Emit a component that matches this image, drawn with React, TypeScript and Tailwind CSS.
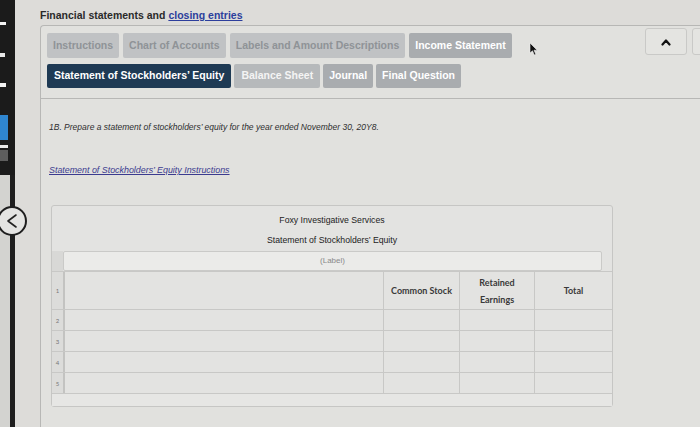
import React from "react";

const SANS = { fontFamily: '"Liberation Sans", Arial, sans-serif' };
const LATO = { fontFamily: 'Lato, "Open Sans", sans-serif' };

function LeftRail() {
  return (
    <div className="w-[15px] shrink-0 flex flex-col h-full">
      <div className="h-[175px] bg-[#1b1b1b] relative">
        <div className="absolute left-0 top-[22px] w-[6px] h-[3px] bg-[#f2f2f2]" />
        <div className="absolute left-0 top-[53px] w-[5px] h-[4px] bg-[#e8e8e8]" />
        <div className="absolute left-0 top-[83px] w-[6px] h-[4px] bg-[#f2f2f2]" />
        <div className="absolute left-0 top-[115px] w-[8px] h-[25px] bg-[#2f86d0]" />
        <div className="absolute left-0 top-[145px] w-[8px] h-[3px] bg-[#e8e8e8]" />
        <div className="absolute left-0 top-[150px] w-[8px] h-[11px] bg-[#5e5e5e]" />
      </div>
      <div className="flex-1 flex">
        <div className="w-[10px] bg-[#d3d3d0]" />
        <div className="w-[5px] bg-[#1e1e1e]" />
      </div>
    </div>
  );
}

function Tab({ label, variant, tight }: { label: string; variant: "visited" | "plain" | "active" | "dim"; tight?: boolean }) {
  const cls =
    variant === "active"
      ? "bg-[#1e3a54] text-white"
      : variant === "visited"
      ? "bg-[#c0c2c4] text-[#8f9397]"
      : variant === "dim"
      ? "bg-[#b6b9bb] text-[#f4f4f4]"
      : "bg-[#a9acaf] text-white";
  return (
    <div
      className={`h-full flex items-center ${tight ? "px-[6px]" : "px-[7px]"} rounded-[2px] text-[10.5px] font-bold whitespace-nowrap ${cls}`}
    >
      {label}
    </div>
  );
}

function Cell({ children, className = "" }: { children?: React.ReactNode; className?: string }) {
  return <div className={`border-r border-[#c8c8c6] ${className}`}>{children}</div>;
}

function Row({ n }: { n: number }) {
  return (
    <div className="flex h-[21px] border-b border-[#c8c8c6]">
      <div
        className="w-[13px] border-r-2 border-[#c3c3c1] bg-[#dcdcda] flex items-center justify-center text-[6px] text-[#777]"
        style={LATO}
      >
        {n}
      </div>
      <Cell className="w-[319px]" />
      <Cell className="w-[76px]" />
      <Cell className="w-[75px]" />
      <div className="flex-1" />
    </div>
  );
}

export default function App() {
  return (
    <div className="w-[700px] h-[427px] flex overflow-hidden bg-[#dddcd9] relative text-[#2b2b2b]" style={SANS}>
      <LeftRail />
      <div className="flex-1 flex flex-col pl-[25px] min-w-0">
        <div className="h-[25px] pt-[9px] text-[10.5px] font-bold leading-[12px] text-[#2a2a2a] whitespace-nowrap">
          Financial statements and <span className="text-[#2c3e9c] underline">closing entries</span>
        </div>
        <div className="flex-1 flex flex-col border-l border-t border-[#b7b7b5] rounded-tl-[4px] bg-[#e1e1de]">
          <div className="flex h-[73px] border-b border-[#b7b7b5] pl-[6px] pt-[2px]">
            <div className="flex flex-col gap-[6px] mt-[5px]">
              <div className="flex gap-[4px] h-[25px]">
                <Tab label="Instructions" variant="visited" tight />
                <Tab label="Chart of Accounts" variant="visited" tight />
                <Tab label="Labels and Amount Descriptions" variant="visited" tight />
                <Tab label="Income Statement" variant="plain" tight />
              </div>
              <div className="flex gap-[3px] h-[24px]">
                <Tab label="Statement of Stockholders’ Equity" variant="active" />
                <Tab label="Balance Sheet" variant="dim" />
                <Tab label="Journal" variant="plain" tight />
                <Tab label="Final Question" variant="plain" tight />
              </div>
            </div>
            <div className="ml-auto flex gap-[5px] mr-[-34px] shrink-0">
              <div className="w-[42px] h-[27px] border border-[#c9c9c7] rounded-[3px] bg-[#e4e4e1] flex items-center justify-center">
                <svg width="10" height="8" viewBox="0 0 10 8">
                  <path
                    d="M1.5 6.5 L5 2.5 L8.5 6.5"
                    fill="none"
                    stroke="#111"
                    strokeWidth="2.2"
                    strokeLinecap="round"
                    strokeLinejoin="round"
                  />
                </svg>
              </div>
              <div className="w-[42px] h-[27px] border border-[#c9c9c7] rounded-[3px] bg-[#e4e4e1]" />
            </div>
          </div>
          <div className="flex flex-col pl-[8px] pt-[22px]">
            <div className="text-[8.5px] italic leading-[12px] text-[#2e2e2e] whitespace-nowrap">
              1B. Prepare a statement of stockholders’ equity for the year ended November 30, 20Y8.
            </div>
            <div className="mt-[31px] text-[8.9px] italic leading-[12px] text-[#3b3b8f] underline whitespace-nowrap">
              Statement of Stockholders’ Equity Instructions
            </div>
            <div className="mt-[29px] ml-[2px] w-[562px] h-[202px] border border-[#c6c6c4] rounded-[3px] bg-[#e3e3e1] flex flex-col">
              <div className="pt-[8px] text-center text-[8.7px] leading-[12px] text-[#222]">Foxy Investigative Services</div>
              <div className="mt-[8px] text-center text-[8.7px] leading-[12px] text-[#222]">
                Statement of Stockholders’ Equity
              </div>
              <div className="mt-[5px] flex h-[20px]">
                <div className="w-[11px] bg-[#d8d8d6]" />
                <div className="w-[539px] border border-[#cacac8] rounded-[2px] bg-[#ebebe9] flex items-center justify-center text-[8px] text-[#8a8a8a]">
                  (Label)
                </div>
              </div>
              <div className="flex h-[39px] border-y border-[#c8c8c6]">
                <div
                  className="w-[13px] border-r-2 border-[#c3c3c1] bg-[#dcdcda] flex items-center justify-center text-[6px] text-[#777]"
                  style={LATO}
                >
                  1
                </div>
                <Cell className="w-[319px]" />
                <Cell className="w-[76px] flex items-center justify-center text-[9px] font-bold text-[#3a3a3a]">
                  <span style={LATO}>Common Stock</span>
                </Cell>
                <Cell className="w-[75px] flex flex-col items-center justify-center text-[9px] font-bold leading-[17px] text-[#3a3a3a]">
                  <span style={LATO}>Retained</span>
                  <span style={LATO}>Earnings</span>
                </Cell>
                <div className="flex-1 flex items-center justify-center text-[9px] font-bold text-[#3a3a3a]">
                  <span style={LATO}>Total</span>
                </div>
              </div>
              <Row n={2} />
              <Row n={3} />
              <Row n={4} />
              <Row n={5} />
              <div className="h-[12px] bg-[#e6e6e4]" />
            </div>
          </div>
        </div>
      </div>
      <div className="absolute left-[-3px] top-[206px] w-[30px] h-[30px] rounded-full border-2 border-[#1e1e1e] bg-[#e4e4e2] flex items-center justify-center">
        <svg width="14" height="16" viewBox="0 0 14 16">
          <path d="M11 2 L3 8 L11 14" fill="none" stroke="#222" strokeWidth="1.6" strokeLinecap="round" strokeLinejoin="round" />
        </svg>
      </div>
      <svg className="absolute left-[529px] top-[42px]" width="9" height="14" viewBox="0 0 9 14">
        <path d="M1 1 L1 11 L3.5 8.8 L5.3 13 L6.8 12.3 L5 8.2 L8.2 8.2 Z" fill="#111" stroke="#eee" strokeWidth="0.6" />
      </svg>
    </div>
  );
}
